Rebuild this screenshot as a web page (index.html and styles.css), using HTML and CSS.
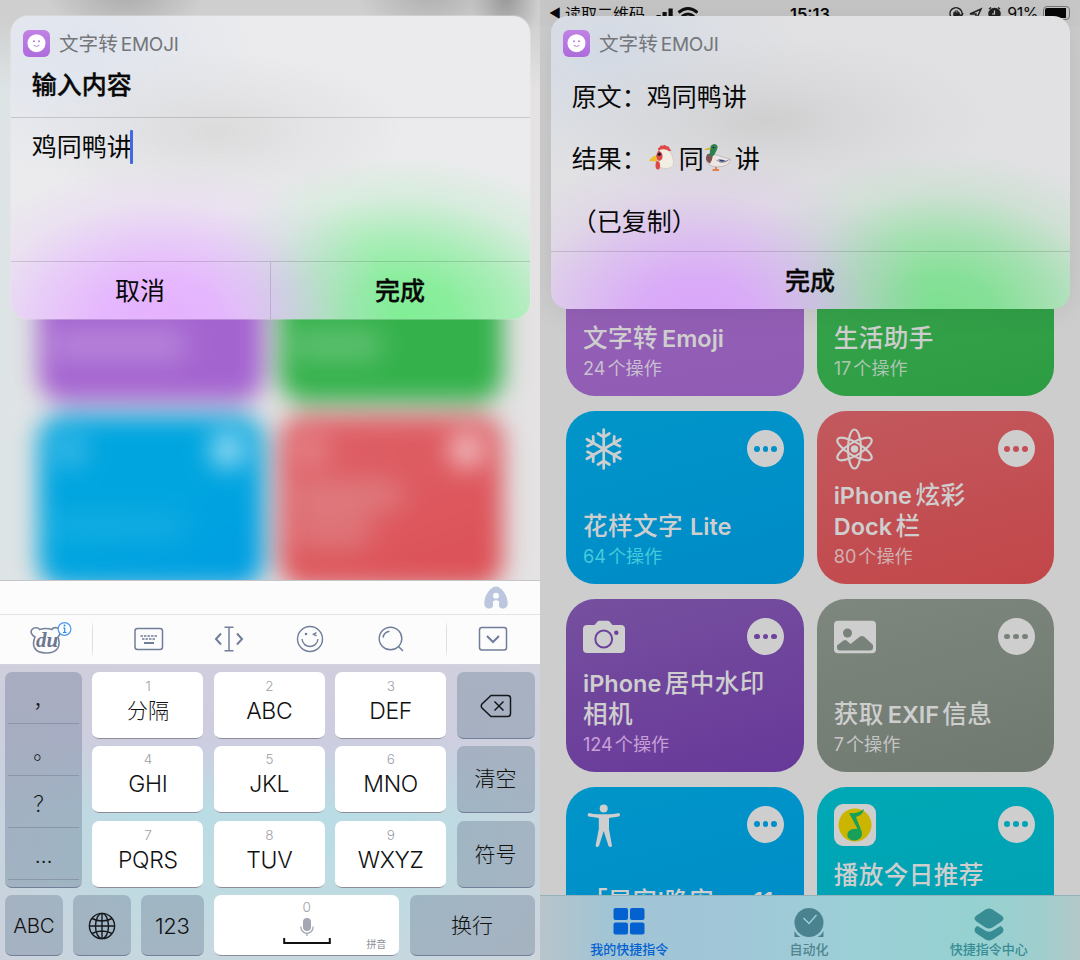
FILE: index.html
```
<!DOCTYPE html>
<html lang="zh-CN">
<head>
<meta charset="utf-8">
<title>文字转Emoji</title>
<link rel="stylesheet" href="styles.css">
</head>
<body>
<svg width="0" height="0" class="defs">
  <symbol id="smile" viewBox="0 0 27 27"><circle cx="13.5" cy="13.2" r="9" fill="#fff"/><g fill="#b87ae0"><circle cx="11" cy="11.2" r="1"/><circle cx="16" cy="11.2" r="1"/></g><path d="M10.7 15.3q2.8 2.3 5.6 0" fill="none" stroke="#b87ae0" stroke-width="1"/></symbol>
</svg>
<main class="screens">
  <section class="phone input-screen">
    <div class="stage">
      <div class="blur-top"></div>
      <div class="blur-grid">
        <div class="blob b-purple"><i class="smear s1"></i></div>
        <div class="blob b-green"><i class="smear s1 short"></i></div>
        <div class="blob b-blue"><i class="dot left"></i><i class="dot right"></i><i class="smear s2"></i></div>
        <div class="blob b-red"><i class="dot left"></i><i class="dot right"></i><i class="smear s3"></i><i class="smear s4"></i></div>
      </div>
      <div class="dialog dialog-input">
        <header class="dialog-head"><span class="app-icon"><svg width="27" height="27"><use href="#smile"/></svg></span><span class="app-name">文字转<span class="latin">EMOJI</span></span></header>
        <h1 class="prompt">输入内容</h1>
        <div class="entry">鸡同鸭讲<span class="caret"></span></div>
        <footer class="actions"><span class="action">取消</span><span class="action strong">完成</span></footer>
      </div>
    </div>
    <div class="keyboard">
      <div class="candidates"><svg width="26" height="26" viewBox="0 0 26 26"><path d="M13 1.500C8 1.500 1.300 9.500 1.300 18.500c0 5.500 6.700 6.700 8.800 2.700V16h5.800v5.200c2.100 4 8.800 2.800 8.800-2.700C24.700 9.500 18 1.500 13 1.500z" fill="#bdc6df"/><circle cx="13" cy="10.800" r="3" fill="#fcfcfc"/><path d="M10.200 24v-7.500q2.800-3 5.600 0V24z" fill="#fcfcfc"/></svg></div>
      <div class="tools">
        <span class="tool du"><svg width="42" height="34" viewBox="0 0 42 34" fill="none"><path d="M5 15C1.500 13 0 10 2 7.500S8.500 5.500 9.500 7.500Q16 5.500 22 7.500C23 5 28 5 29.500 7.500S30 13 28 15C31 24 28 31 16 31S1.500 23 5 15z" stroke="#77829b" stroke-width="1.600"/><circle cx="34.500" cy="7" r="6.400" fill="#fcfcfc" stroke="#4898f0" stroke-width="1.200"/><path d="M33.200 6h1.500v4.500m-1.700 0h3.400" stroke="#258af5" stroke-width="1.200"/><circle cx="34.500" cy="3.600" r="1" fill="#258af5"/></svg><b class="du-text">du</b></span>
        <i class="tool-line"></i>
        <span class="tool"><svg width="30" height="24" viewBox="0 0 30 24" fill="none" stroke="#717e99"><rect x="1" y="1.500" width="27.500" height="21" rx="2.500" stroke-width="1.500"/><path d="M6.500 9h17M8 12h14" stroke-width="1.700" stroke-dasharray="2.500 1"/><path d="M10 16h10" stroke-width="2"/></svg></span>
        <span class="tool"><svg width="30" height="26" viewBox="0 0 30 26" fill="none" stroke="#717e99"><path d="M10.500 1.200h9M10.500 24.800h9M15 1.500v23" stroke-width="1.500"/><path d="M7 7.500L2 13l5 5.500M23 7.500l5 5.500-5 5.500" stroke-width="2"/></svg></span>
        <span class="tool"><svg width="28" height="28" viewBox="0 0 28 28" fill="none" stroke="#717e99" stroke-width="1.400"><circle cx="14" cy="14" r="12.500"/><path d="M6 14c1 10 15 10 16 0M20.500 7.700L17.500 9.200l3 1.600"/><circle cx="10" cy="9" r=".6"/></svg></span>
        <span class="tool"><svg width="28" height="28" viewBox="0 0 28 28" fill="none" stroke="#717e99" stroke-width="1.400"><circle cx="13.500" cy="13.500" r="11.300"/><path d="M6 12.500Q7 7 12.500 6.200M21.500 21.500L26 26" stroke-width="1.500"/></svg></span>
        <i class="tool-line"></i>
        <span class="tool"><svg width="30" height="26" viewBox="0 0 30 26" fill="none" stroke="#717e99"><rect x="1.500" y="1.500" width="27" height="22.500" rx="2.500" stroke-width="1.500"/><path d="M9 10l6 6 6-6" stroke-width="2"/></svg></span>
      </div>
      <div class="keys">
        <div class="key gray punct"><span>，</span><span>。</span><span>？</span><span>…</span></div>
        <div class="key"><small>1</small><span class="cn">分隔</span></div><div class="key"><small>2</small>ABC</div><div class="key"><small>3</small>DEF</div>
        <div class="key gray icon-key"><svg width="32" height="24" viewBox="0 0 32 24" fill="none" stroke="#15181d" stroke-width="1.500"><path d="M11 1.500h16.500a3 3 0 0 1 3 3v15a3 3 0 0 1-3 3H11L2 14q-1.500-2 0-4zM14.500 7.500l9 9m0-9l-9 9"/></svg></div>
        <div class="key"><small>4</small>GHI</div><div class="key"><small>5</small>JKL</div><div class="key"><small>6</small>MNO</div><div class="key gray cn">清空</div>
        <div class="key"><small>7</small>PQRS</div><div class="key"><small>8</small>TUV</div><div class="key"><small>9</small>WXYZ</div><div class="key gray cn">符号</div>
      </div>
      <div class="keys-bottom">
        <div class="key gray alpha">ABC</div>
        <div class="key gray"><svg width="28" height="28" viewBox="0 0 28 28" fill="none" stroke="#15181d" stroke-width="1.400"><circle cx="14" cy="14" r="12.600"/><ellipse cx="14" cy="14" rx="6.500" ry="12.600"/><path d="M14 1.400v25.200M1.400 14h25.200M4 6.500q10 5 20 0M4 21.500q10-5 20 0"/></svg></div>
        <div class="key gray digits">123</div>
        <div class="key space"><small>0</small><svg width="48" height="30" viewBox="0 0 48 30" fill="none"><rect x="20" y="1" width="8" height="13" rx="4" fill="#a3a7b2"/><path d="M17.800 9.500c0 9 12.400 9 12.400 0M24 16v3" stroke="#a3a7b2" stroke-width="1.300"/><path d="M1.200 21v5h45.600v-5" stroke="#111" stroke-width="2"/></svg><em>拼音</em></div>
        <div class="key gray cn">换行</div>
      </div>
    </div>
  </section>

  <section class="phone result-screen">
    <div class="status">
      <span class="back"><i>◀</i>读取二维码</span>
      <svg class="signal" width="48" height="16" viewBox="0 0 48 16"><path d="M1 13h4v3H1zM6.500 11h4.200v5H6.500zM12.500 8h4.200v8h-4.200zM18.500 4.500h4.200V16h-4.200z" fill="#111"/><path d="M28.500 8.500Q38 .5 47.500 8.500M32 12.500q6-5 12 0" fill="none" stroke="#111" stroke-width="3"/></svg>
      <b class="clock">15:13</b>
      <span class="indicators">
        <svg width="54" height="16" viewBox="0 0 54 16" fill="none" stroke="#222" stroke-width="1.500"><path d="M3 12A6 6 0 1 1 13 12M11 9l2.500 2L15 8"/><rect x="6" y="8" width="5" height="4" fill="#222"/><path d="M7 8V6h3v2" stroke-width="1"/><path d="M22 9l11-5-5 11v-6z"/><circle cx="46.500" cy="9" r="5.500" fill="#222"/><path d="M41 4l2-1.500M52 4l-2-1.500"/><path d="M46.500 5.500V9H44" stroke="#ccc" stroke-width="1.200"/></svg>
        <span>91%</span><i class="battery"></i>
      </span>
    </div>
    <div class="cards">
      <article class="card purple"><h2>文字转<span class="latin">Emoji</span></h2><p><span class="n">24</span>个操作</p></article>
      <article class="card green"><h2>生活助手</h2><p><span class="n">17</span>个操作</p></article>
      <article class="card blue"><div class="card-top"><svg width="42" height="42" viewBox="0 0 42 42" fill="none" stroke="#cecece" stroke-width="2.700" stroke-linecap="round"><g id="arm"><path d="M20.700 21V1.500M15 5.500l5.700 3.700 5.700-3.700"/></g><use href="#arm" transform="rotate(60 20.700 21)"/><use href="#arm" transform="rotate(120 20.700 21)"/><use href="#arm" transform="rotate(180 20.700 21)"/><use href="#arm" transform="rotate(240 20.700 21)"/><use href="#arm" transform="rotate(300 20.700 21)"/></svg><span class="more"><i></i><i></i><i></i></span></div><h2>花样文字<span class="latin wide">Lite</span></h2><p class="mint"><span class="n">64</span>个操作</p></article>
      <article class="card red"><div class="card-top"><svg width="42" height="42" viewBox="0 0 42 42" fill="none" stroke="#cecece" stroke-width="2.200"><ellipse cx="20.500" cy="21" rx="6.500" ry="19.500"/><ellipse cx="20.500" cy="21" rx="6.500" ry="19.500" transform="rotate(60 20.500 21)"/><ellipse cx="20.500" cy="21" rx="6.500" ry="19.500" transform="rotate(120 20.500 21)"/><circle cx="20.500" cy="21" r="3.700" fill="#cecece" stroke="none"/></svg><span class="more"><i></i><i></i><i></i></span></div><h2><span class="latin-l">iPhone</span>炫彩<br><span class="latin-l">Dock</span>栏</h2><p><span class="n">80</span>个操作</p></article>
      <article class="card violet"><div class="card-top"><svg width="42" height="42" viewBox="0 0 42 42"><path d="M4 9h7.500l3-3.500q.7-.7 2-.7h8q1.300 0 2 .7l3 3.500H38q4 0 4 4v20q0 4-4 4H4q-4 0-4-4V13q0-4 4-4z" fill="#cecece"/><circle cx="20.700" cy="23" r="8.400" fill="none" stroke="#6c429c" stroke-width="2"/><circle cx="33.300" cy="16.700" r="2.200" fill="#6c429c"/></svg><span class="more"><i></i><i></i><i></i></span></div><h2><span class="latin-l">iPhone</span>居中水印<br>相机</h2><p class="lilac"><span class="n">124</span>个操作</p></article>
      <article class="card slate"><div class="card-top"><svg width="42" height="42" viewBox="0 0 42 42"><rect y="4.800" width="42" height="32.500" rx="4" fill="#cecece"/><circle cx="13.500" cy="17" r="4.500" fill="#78827a"/><path d="M3 31v-1.500L9.500 24.500q1.500-1 3 0l4 3.500 9.500-7.500q2-1 4 0L39 29v2.500q0 3-3 3H6q-3 0-3-3z" fill="#78827a"/></svg><span class="more"><i></i><i></i><i></i></span></div><h2>获取<span class="latin-m">EXIF</span>信息</h2><p><span class="n">7</span>个操作</p></article>
      <article class="card azure"><div class="card-top"><svg width="42" height="46" viewBox="0 0 42 46" fill="#cecece"><circle cx="20.700" cy="4.500" r="4"/><path d="M6 9q4 1.200 10 1.200h9Q31 10.200 36 9q2 1.800 0 3.500l-10 1.500v11l3 17q-1.500 2-3.500 0L20.700 27 16 42q-2 2-3.500 0l3.300-17V14L5.500 12.500Q3.500 10.500 6 9z"/></svg><span class="more"><i></i><i></i><i></i></span></div><h2>「早安!晚安」v11</h2><p>&nbsp;</p></article>
      <article class="card teal"><div class="card-top"><svg width="42" height="42" viewBox="0 0 42 42"><rect width="42" height="42" rx="9" fill="#cecece"/><circle cx="21" cy="21" r="16.500" fill="#ccb500"/><path d="M15 9q9 1 15-4-1 6-8 8l5.500 14c2 6-2.500 9.500-7 9.500-9 0-9.500-10.500-1-11.500l4-.2z" fill="#18a058"/></svg><span class="more"><i></i><i></i><i></i></span></div><h2>播放今日推荐<br>&nbsp;</h2><p>&nbsp;</p></article>
    </div>
    <div class="dialog dialog-result">
      <header class="dialog-head"><span class="app-icon"><svg width="27" height="27"><use href="#smile"/></svg></span><span class="app-name">文字转<span class="latin">EMOJI</span></span></header>
      <div class="result">
        <p>原文：鸡同鸭讲</p>
        <p>结果：<svg class="emoji" width="29" height="29" viewBox="0 0 29 29"><path d="M11 7Q8.500 4 11.500 3.500 12 .8 14.500 1.800 17 0 18.500 2.300 21.500 2 21.500 4.500L23.500 7z" fill="#df4648"/><path d="M9 13C8.500 7 13 4.500 17 5.500c5 .5 7.500 5.500 8.500 12 .5 5.500-3.500 7-8 7C12.500 24.500 9 21 9 13z" fill="#f3eee4" stroke="#c9bda8" stroke-width=".5"/><path d="M10 7q4 0 4.500 4.500T11 17q-2.500-1-3-5z" fill="#e04a4b"/><path d="M8 17q3.500-.5 4 3 .5 5.500-2 5.500t-2.500-4z" fill="#dc4848"/><path d="M1 17q3-5 6.500-5.500 2 2 1.500 6z" fill="#eebf29"/><circle cx="11.300" cy="10.300" r="1.800" fill="#22252c"/></svg>同<svg class="emoji duck" width="29" height="29" viewBox="0 0 29 29"><path d="M13 22v5m0 0h-3.500m3.500 0h3" fill="none" stroke="#e38146" stroke-width="2"/><path d="M4 12q4-2.500 8-.5l11 3.500 4.500 1Q27 22 19 23.500 8 25.500 4 19 2.500 15 4 12z" fill="#eee6e6" stroke="#aaa2a5" stroke-width=".6"/><path d="M4 11.500q3-1.500 6 .5-.5 5-3 8.500Q1 18 4 11.500z" fill="#805350"/><path d="M5.500 12.200Q7.500 10 7 7q0-6 4.500-6Q16.500 2 13.500 7.500L11 12.500q-3 1-5.500-.3z" fill="#2c8150"/><path d="M1 6.500Q4 5 7.200 4.500l.5 2.300Q4 7.500 1 6.500z" fill="#d8b53b"/><circle cx="10.500" cy="4.500" r=".8" fill="#111"/><path d="M12 16.500q8 3 15-.5-5 5-10 3.500z" fill="#8d868b"/><path d="M15 16.500q4-.5 7 1-3 2.500-7-1z" fill="#27438c"/></svg>讲</p>
        <p class="copied">（已复制）</p>
      </div>
      <footer class="actions"><span class="action strong">完成</span></footer>
    </div>
    <nav class="tabs">
      <span class="tab active"><svg width="32" height="32" viewBox="0 0 32 32" fill="#0362cf"><rect x=".5" y="2" width="14.500" height="12" rx="2"/><rect x="17" y="2" width="14.500" height="12" rx="2"/><rect x=".5" y="16.500" width="14.500" height="12" rx="2"/><rect x="17" y="16.500" width="14.500" height="12" rx="2"/></svg>我的快捷指令</span>
      <span class="tab"><svg width="32" height="32" viewBox="0 0 32 32"><circle cx="16" cy="16.500" r="14.500" fill="#4a838f"/><path d="M1.500 25q2 4 6 6h-6zM30.500 25q-2 4-6 6h6z" fill="#4a838f"/><path d="M10.500 12l5.500 5.500L23.500 9" fill="none" stroke="#9fd0d8" stroke-width="1.400"/></svg>自动化</span>
      <span class="tab mall"><svg width="32" height="36" viewBox="0 0 32 36" fill="#388c94"><path d="M3.500 20.500Q1.500 22 1.500 24q0 2 2 3.500l9 6q3.500 2 7 0l9-6q2-1.500 2-3.500 0-2-2-3.500l-1-.5-8.500 5q-3 1.500-6 0L4.500 20z"/><path d="M12.500 3.500q3.500-2 7 0l9 6q4 3 0 6l-9 6q-3.500 2-7 0l-9-6q-4-3 0-6z"/></svg>快捷指令中心</span>
    </nav>
  </section>
</main>
</body>
</html>
```

FILE: styles.css
```
* { box-sizing: border-box; }
body { margin: 0; width: 1080px; height: 960px; overflow: hidden; font-family: Inter, "Noto Sans CJK SC", sans-serif; color: #080808; }
h1, h2, p { margin: 0; }
i, em { font-style: normal; }
.defs { position: absolute; }
.screens { display: flex; }
.phone { position: relative; width: 540px; height: 960px; overflow: hidden; display: flex; flex-direction: column; }

/* Input screen: out-of-focus library behind the prompt */
.stage { position: relative; height: 580px; overflow: hidden; background: linear-gradient(90deg, #dde4e6 0%, #e4e4e4 10%, #e4e2e3 100%); }
.blur-top { position: absolute; left: -10px; top: -10px; width: 560px; height: 100px; background: radial-gradient(ellipse 80px 50px at 135px 0, #aaa, transparent), radial-gradient(ellipse 75px 50px at 440px 0, #aeaeae, transparent), radial-gradient(ellipse 35px 65px at 515px 0, #939393, transparent), linear-gradient(#cfcfcf 30px, rgba(224,226,228,0)); }
.blur-grid { display: grid; grid-template-columns: 226px 224px; grid-auto-rows: 173px; gap: 13px 15px; padding: 229px 0 0 38px; filter: blur(12px); }
.blob { position: relative; border-radius: 26px; }
.b-purple { background: #a464d0; }
.b-green { background: #34b14b; }
.b-blue { background: linear-gradient(150deg, #00a5df 50%, #009de2); }
.b-red { background: linear-gradient(160deg, #de6269, #dc5055); }
.dot { position: absolute; top: 17px; width: 36px; height: 36px; border-radius: 50%; background: rgba(255,255,255,.22); filter: blur(3px); }
.dot.left { left: 14px; }
.dot.right { right: 18px; background: rgba(255,255,255,.6); }
.smear { position: absolute; left: 10px; background: rgba(255,255,255,.2); border-radius: 20px; filter: blur(6px); }
.s1 { top: 99px; width: 140px; height: 34px; }
.s1.short { width: 95px; }
.s2 { top: 99px; width: 140px; height: 24px; background: rgba(80,205,240,.25); }
.s3 { top: 65px; width: 115px; height: 32px; background: rgba(225,180,180,.35); }
.s4 { top: 96px; width: 85px; height: 40px; background: rgba(225,180,180,.3); }

.dialog { position: absolute; left: 10.500px; top: 15.500px; width: 519px; border-radius: 17px; overflow: hidden; display: flex; flex-direction: column; }
.dialog-input { height: 303.500px; box-shadow: 0 0 0 1px rgba(240,240,240,.3); background:
  radial-gradient(ellipse 235px 160px at 150px 305px, #e5b2ff 0%, rgba(229,178,255,.93) 25%, rgba(229,182,255,.62) 50%, rgba(232,196,252,.25) 75%, rgba(232,200,250,0)),
  radial-gradient(ellipse 225px 165px at 391px 305px, #80ee96 0%, rgba(130,238,150,.93) 25%, rgba(136,238,156,.65) 50%, rgba(160,238,178,.28) 75%, rgba(180,238,190,0)),
  radial-gradient(ellipse 190px 80px at 205px 115px, #dbdbdc, rgba(222,222,224,.6) 45%, rgba(235,235,238,0)),
  radial-gradient(ellipse 190px 130px at 65px 35px, #dfe4ee, rgba(235,235,238,0)),
  #ebebed; }
.dialog-result { height: 293px; box-shadow: 0 0 30px rgba(0,0,0,.09); background:
  radial-gradient(ellipse 235px 170px at 145px 305px, #d9a6fa 0%, rgba(217,167,249,.93) 25%, rgba(217,172,247,.62) 50%, rgba(218,182,240,.25) 75%, rgba(217,185,236,0)),
  radial-gradient(ellipse 225px 165px at 391px 300px, #7bdf90 0%, rgba(128,224,146,.93) 25%, rgba(134,224,152,.65) 50%, rgba(160,222,174,.28) 75%, rgba(170,222,180,0)),
  radial-gradient(ellipse 220px 85px at 215px 105px, #cfcfd0, rgba(212,212,214,.6) 45%, rgba(225,225,228,0)),
  radial-gradient(ellipse 190px 130px at 55px 35px, #d3dae5, rgba(225,225,228,0)),
  #e1e1e3; }
.dialog-head { flex: none; display: flex; align-items: center; height: 54px; padding: 1px 0 0 12.500px; gap: 9px; }
.app-icon { width: 27px; height: 27px; border-radius: 6px; background: linear-gradient(#c082e4, #ae6bdc); }
.app-icon svg { display: block; }
.app-name { font-size: 19.600px; color: #74767a; line-height: 26px; padding-top: 2px; }
.app-name .latin { font-size: 19px; margin-left: 3px; letter-spacing: -.25px; }
.prompt { flex: none; height: 48px; padding-left: 21.300px; font-size: 25px; line-height: 31px; border-bottom: 1px solid rgba(0,0,0,.15); }
.prompt, .strong { font-weight: 500; -webkit-text-stroke: .35px #080808; }
.entry { flex: 1; display: flex; padding: 12px 0 0 21.300px; font-size: 25px; line-height: 34px; }
.caret { width: 3px; height: 34px; margin-left: -1.500px; background: #4169e6; border-radius: 1px; }
.actions { flex: none; display: flex; height: 58px; border-top: 1px solid rgba(0,0,0,.13); }
.action { flex: 1; font-size: 25px; line-height: 59px; text-align: center; }
.dialog-input .action + .action { border-left: 1px solid rgba(0,0,0,.13); }
.result { flex: 1; min-height: 0; padding: 12px 0 0 21.300px; font-size: 25px; }
.result p { height: 62.500px; line-height: 30px; display: flex; align-items: flex-start; }
.emoji { margin: 0 2px 0 1px; }
.duck { margin: -1px 3px 0 -1px; }

/* Keyboard */
.keyboard { height: 380px; border-top: 1px solid #c5c5ca; background: linear-gradient(90deg, rgba(205,207,219,.7), transparent 25%, transparent 75%, rgba(207,211,219,.7)), linear-gradient(#d1cede 85px, #cdcde0 160px, #badce5 230px, #bddce3 290px, #c7d7df 380px); }
.candidates { height: 33px; background: #fcfcfc; display: flex; justify-content: flex-end; padding: 4px 31px 0 0; }
.tools { height: 51px; display: flex; align-items: center; padding-bottom: 1px; background: #fcfcfc; border-top: 1px solid #e4e4e6; border-bottom: 1px solid #d4d2dc; }
.tool { display: flex; justify-content: center; flex: 0 0 81px; }
.tool svg { display: block; }
.tool-line { width: 1px; height: 37px; background: linear-gradient(transparent, #dedfe4 20%, #dedfe4 80%, transparent); }
.du { position: relative; flex-basis: 92px; padding-left: 9px; }
.du svg { margin-top: -1px; }
.du-text { position: absolute; left: 36px; top: 6px; font: italic bold 21px/22px "Liberation Serif", serif; color: #6c7690; }
.tools .tool:nth-of-type(2) { flex-basis: 111px; }
.tools .tool:nth-of-type(3) { flex-basis: 50px; }
.tools .tool:nth-of-type(4) { flex-basis: 112px; }
.tools .tool:nth-of-type(5) { flex-basis: 49px; margin-right: 31px; }
.tools .tool:nth-of-type(6) { flex-basis: 91px; }
.keys { display: grid; grid-template-columns: 77px 111px 111px 111px 78px; grid-template-rows: 73.500px 75.500px 67px; column-gap: 10.400px; padding: 7px 0 0 5px; }
.key { height: 67px; display: flex; flex-direction: column; align-items: center; justify-content: center; border-radius: 7px; background: #fff; box-shadow: inset 0 -2px 0 -1px #8b8d98; padding-bottom: 5px; font-size: 23px; font-weight: 300; line-height: 30px; letter-spacing: -.3px; color: #111; }
.key.gray { padding-bottom: 0; }
.key.cn, .key .cn { font-size: 21px; letter-spacing: 0; }
.key small { font-size: 13.500px; line-height: 17px; color: #9da0a8; margin: -3px 0 1px; }
.key.gray { background: rgba(128,146,166,.5); box-shadow: inset 0 -2px 0 -1px #737f98; }
.punct { grid-row: span 3; }
.key.punct { height: 216px; justify-content: flex-start; background: linear-gradient(rgba(130,138,165,.5), rgba(124,146,166,.5)); }
.punct span { width: 71px; height: 52px; border-bottom: 1px solid #8995a8; line-height: 55px; text-align: center; font-size: 21px; }
.keys-bottom { display: grid; grid-template-columns: 57.500px 57.500px 62.500px 185px 125px; gap: 10.500px; padding-left: 5px; margin-top: 7px; }
.keys-bottom .key { height: 61px; }
.key.alpha { font-size: 20.500px; }
.key.digits { font-size: 22px; }
.key.space { position: relative; justify-content: flex-start; padding-bottom: 0; }
.space small { margin: 4px 0 1px; }
.space em { position: absolute; right: 13px; bottom: 4px; font-size: 10px; line-height: 16px; font-weight: 400; color: #8d9099; }

/* Library screen */
.result-screen { background: #cdcdcd; }
.status { position: relative; flex: none; display: flex; align-items: center; height: 26px; padding: 0 10px 0 9px; font-size: 16px; background: linear-gradient(#c6c6c6, #cacaca); }
.back { display: flex; align-items: center; gap: 4px; }
.back i { font-size: 13px; }
.signal { margin: -3px 0 0 5px; }
.clock { position: absolute; left: 250px; top: 4px; font-size: 16.500px; line-height: 20px; font-weight: 600; }
.indicators { margin-left: auto; display: flex; align-items: center; gap: 5px; letter-spacing: -.5px; }
.battery { width: 27px; height: 14px; border: 1.500px solid #777; border-radius: 4px; padding: 1px 3px 1px 1px; background: #080808 content-box; }
.cards { display: grid; grid-template-columns: 237.500px 237.500px; grid-auto-rows: 173px; gap: 14.800px 13.200px; padding: 197.400px 0 0 26px; }
.card { display: flex; flex-direction: column; justify-content: flex-end; border-radius: 29px; padding: 0 17px 13.400px; color: #cecece; }
.card-top { display: flex; justify-content: space-between; align-items: flex-start; margin-bottom: auto; padding-top: 17px; }
.more { width: 37px; height: 37px; margin: 2px 2.500px 0 0; border-radius: 50%; background: #cecece; display: flex; align-items: center; justify-content: center; gap: 3px; }
.more i { width: 5.800px; height: 5.800px; border-radius: 50%; background: var(--tone); }
.card h2 { font-size: 24.600px; font-weight: 500; line-height: 31px; letter-spacing: .4px; white-space: nowrap; }
.card .latin, .card .latin-l, .card .latin-m { font-size: 23.500px; font-weight: 600; letter-spacing: 0; }
.card .latin { margin-left: 4px; }
.card .latin.wide { margin-left: 7px; }
.card .latin-l { margin-right: 3.500px; }
.card .latin-m { margin: 0 3px 0 4px; }
.card.azure h2 { letter-spacing: .1px; }
.card p { font-size: 18.100px; line-height: 29px; color: rgba(212,210,214,.85); }
.card p .n { margin-right: 2px; }
.card .mint { color: #45cadb; }
.card .lilac { color: #c8a0d8; }
.purple { background: linear-gradient(170deg, #9864b8, #8f5bb4); }
.green { background: linear-gradient(165deg, #3ba64e, #2c9c43); }
.blue, .azure { --tone: #0090c8; background: linear-gradient(165deg, #0095c9, #008bc7); }
.red { --tone: #c45055; background: linear-gradient(165deg, #c2595e, #c24649); }
.violet { --tone: #6d439e; background: linear-gradient(165deg, #76509f, #673899); }
.slate { --tone: #78827a; background: linear-gradient(165deg, #7e877e, #6f7970); }
.teal { --tone: #00a4b4; background: linear-gradient(165deg, #00a8b5, #00a0b4); }
.card.teal { padding-bottom: 9px; }
.green p, .red p { color: rgba(212,212,212,.75); }
.tabs { position: absolute; left: 0; bottom: 0; width: 540px; height: 65px; padding-right: 2px; display: grid; grid-template-columns: repeat(3, 1fr); background: linear-gradient(90deg, #b8c4cb, #a1c5d5 12%, #a1c6d8 35%, #9ccfd7 57%, #96d1d1 80%, #a0cece 93%, #b4c7c8); border-top: 1px solid #95b1ba; }
.tab { display: flex; flex-direction: column; align-items: center; padding-top: 10px; font-size: 13px; font-weight: 500; line-height: 18px; color: #50848e; }
.tab svg { flex: none; margin-bottom: 2px; }
.tab.active { color: #0362cf; padding-right: 1px; }
.tab.mall { color: #388c94; padding-left: 1px; }
.tab.mall svg { margin: 0 0 -2px; }
```
